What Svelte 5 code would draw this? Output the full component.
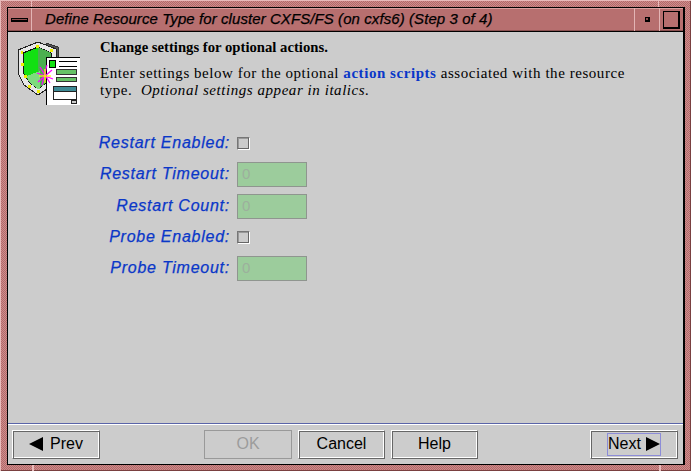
<script>
  const fields = [
    { label: 'Restart Enabled:', type: 'check' },
    { label: 'Restart Timeout:', type: 'text' },
    { label: 'Restart Count:', type: 'text' },
    { label: 'Probe Enabled:', type: 'check' },
    { label: 'Probe Timeout:', type: 'text' }
  ];
</script>

<div class="frame">
  <span class="notch nt-l"></span>
  <span class="notch nt-r"></span>
  <span class="notch nb-l"></span>
  <span class="notch nb-r"></span>
  <div class="window">
    <header class="titlebar">
      <div class="tb-btn menu-btn"><span class="menu-glyph"></span></div>
      <div class="title">Define Resource Type for cluster CXFS/FS (on cxfs6) (Step 3 of 4)</div>
      <div class="tb-btn min-btn"><span class="min-glyph"></span></div>
      <div class="tb-btn max-btn"><span class="max-glyph"></span></div>
    </header>

    <main class="content">
      <div class="intro">
        <svg class="icon" width="70" height="70" viewBox="0 0 70 70" shape-rendering="crispEdges">
          <polygon points="36,8 48,12 48,24 36,24" fill="#555" stroke="#333" />
          <polygon points="28,7 46,14 46,40 40,52 28,60 14,50 8,38 8,15" fill="#e8e8e8" stroke="#222" />
          <polygon points="28,12 41,18 41,38 36,48 28,54 19,47 13,37 13,18" fill="#12e012" stroke="#111" />
          <polygon points="28,12 41,18 41,38 36,48 28,54" fill="#4caf50" />
          <polygon points="17,41 30,36 30,54 28,54 19,47" fill="#7edc7e" />
          <rect x="36.5" y="22.5" width="34" height="48" fill="#fff" stroke="#000" />
          <rect x="39.5" y="25.5" width="6" height="7" fill="#12e012" stroke="#000" />
          <rect x="49" y="26" width="18" height="1" fill="#000" />
          <rect x="49" y="31" width="18" height="1" fill="#000" />
          <rect x="46.5" y="34.5" width="20" height="5" fill="#66c266" stroke="#333" />
          <rect x="46.5" y="42.5" width="20" height="4" fill="#66c266" stroke="#333" />
          <rect x="43.5" y="51.5" width="23" height="5" fill="#3d8a94" stroke="#222" />
          <rect x="43.5" y="56.5" width="23" height="8" fill="#fff" stroke="#222" />
          <rect x="61.5" y="65.5" width="5" height="3" fill="#ccc" stroke="#222" />
          <g fill="#ee0">
            <rect x="26" y="10" width="3" height="3" /><rect x="40" y="14" width="3" height="3" />
            <rect x="11" y="16" width="2" height="3" /><rect x="11" y="28" width="3" height="3" />
            <rect x="14" y="40" width="3" height="3" /><rect x="18" y="50" width="3" height="3" />
            <rect x="27" y="55" width="3" height="3" />
          </g>
          <g stroke="#f0f" stroke-width="1.2" shape-rendering="auto">
            <line x1="27" y1="38" x2="43" y2="44" /><line x1="37" y1="30" x2="32" y2="50" />
            <line x1="28" y1="47" x2="42" y2="35" /><line x1="30" y1="32" x2="40" y2="48" />
          </g>
          <g stroke="#ff0" stroke-width="1.2" shape-rendering="auto">
            <line x1="29" y1="41" x2="41" y2="41" /><line x1="35" y1="34" x2="35" y2="48" />
          </g>
        </svg>
        <div class="copy">
          <h1>Change settings for optional actions.</h1>
          <p>
            <span class="line">Enter settings below for the optional <b>action scripts</b> associated with the resource</span>
            <span class="line">type.&nbsp; <i>Optional settings appear in italics.</i></span>
          </p>
        </div>
      </div>

      <div class="form">
        {#each fields as f}
          <div class="label">{f.label}</div>
          {#if f.type === 'check'}
            <div class="check-cell"><span class="check"></span></div>
          {:else}
            <div class="input">0</div>
          {/if}
        {/each}
      </div>

      <div class="spacer"></div>

      <footer class="actions">
        <button class="btn"><span class="arrow left"></span>Prev</button>
        <div class="middle">
          <button class="btn disabled">OK</button>
          <button class="btn narrow">Cancel</button>
          <button class="btn narrow">Help</button>
        </div>
        <button class="btn next"><span class="focus">Next<span class="arrow right"></span></span></button>
      </footer>
    </main>
  </div>
</div>

<style>
  :global(body) {
    margin: 0;
    background: #ccc;
  }

  .frame {
    position: relative;
    box-sizing: border-box;
    width: 691px;
    height: 471px;
    padding: 7px 6px 6px 7px;
    background: repeating-conic-gradient(#d08c8c 0 25%, #b06a6a 0 50%) 0 0 / 2px 2px;
    box-shadow: inset 1px 1px 0 #e8baba, inset -1px -1px 0 #7a4040;
  }

  .notch {
    position: absolute;
    background: #e8baba;
  }
  .nt-l { left: 31px; top: 0; width: 1px; height: 7px; }
  .nt-r { left: 658px; top: 0; width: 1px; height: 7px; }
  .nb-l { left: 32px; top: 465px; width: 2px; height: 6px; }
  .nb-r { left: 659px; top: 465px; width: 2px; height: 6px; }

  .window {
    box-sizing: border-box;
    height: 100%;
    display: flex;
    flex-direction: column;
    border-left: 1px solid #000;
    border-top: 1px solid #000;
    border-right: 2px solid #000;
    border-bottom: 1px solid #000;
  }

  .titlebar {
    display: flex;
    align-items: stretch;
    height: 24px;
    flex: none;
    background: #b76f6f;
    border-bottom: 1px solid #000;
    box-sizing: border-box;
    box-shadow: inset 0 1px 0 #d9a0a0, inset 0 -1px 0 #8a5050;
  }

  .tb-btn {
    display: flex;
    align-items: center;
    justify-content: center;
    flex: none;
    box-sizing: border-box;
    border-left: 1px solid #e3b5b5;
  }
  .menu-btn {
    width: 24px;
    border-left: 0;
    border-right: 1px solid #e3b5b5;
  }
  .menu-glyph {
    width: 17px;
    height: 4px;
    background: #8c4f4f;
    border: 1px solid #000;
    border-bottom-width: 2px;
    box-sizing: border-box;
  }
  .min-btn { width: 25px; }
  .min-glyph {
    width: 5px;
    height: 5px;
    border: 1px solid #000;
    border-bottom-width: 2px;
    border-right-width: 2px;
    box-sizing: border-box;
    background: #8c4f4f;
  }
  .max-btn { width: 24px; }
  .max-glyph {
    width: 14px;
    height: 15px;
    border: 1px solid #000;
    border-bottom-width: 2px;
    border-right-width: 2px;
  }

  .title {
    flex: 1;
    padding-left: 13px;
    font: italic 15px/22px "Liberation Sans", Arial, sans-serif;
    letter-spacing: 0.08px;
    -webkit-text-stroke: 0.25px #000;
    color: #000;
    white-space: nowrap;
    overflow: hidden;
  }

  .content {
    flex: 1;
    display: flex;
    flex-direction: column;
    background: #ccc;
    min-height: 0;
  }

  .intro {
    display: flex;
    padding: 3px 0 0 2px;
  }
  .icon {
    flex: none;
  }
  .copy {
    margin-left: 20px;
    width: 540px;
    color: #000;
    font-family: "Liberation Serif", "Times New Roman", serif;
  }
  h1 {
    margin: 3px 0 0;
    font-size: 14.7px;
    line-height: 18px;
    font-weight: bold;
  }
  p {
    margin: 9px 0 0;
    font-size: 15px;
    letter-spacing: 0.55px;
    line-height: 17px;
  }
  .line {
    display: block;
    white-space: nowrap;
  }
  p b {
    color: #0a37c8;
  }

  .form {
    display: grid;
    grid-template-columns: 222px 70px;
    grid-template-rows: 25px 26px 25px 25px 25px;
    column-gap: 7px;
    row-gap: 6px;
    padding-top: 26px;
    align-items: center;
  }
  .label {
    align-self: start;
    padding-top: 2px;
    text-align: right;
    font: italic 16px/20px "Liberation Sans", Arial, sans-serif;
    letter-spacing: 0.75px;
    -webkit-text-stroke: 0.25px #0a37c8;
    color: #0a37c8;
  }
  .check-cell {
    display: flex;
    align-items: center;
  }
  .check {
    box-sizing: border-box;
    width: 13px;
    height: 13px;
    background: #ccc;
    border: 1px solid;
    border-color: #777 #fff #fff #777;
    box-shadow: inset -1px -1px 0 #666, inset 1px 1px 0 #999;
  }
  .input {
    align-self: start;
    box-sizing: border-box;
    height: 25px;
    background: #9ccc9c;
    border: 1px solid #8f958f;
    padding-left: 4px;
    font: 15px/22px "Liberation Sans", Arial, sans-serif;
    color: #9cb09c;
  }

  .spacer {
    flex: 1;
  }

  .actions {
    display: flex;
    justify-content: space-between;
    align-items: center;
    border-top: 1px solid #5a64a8;
    box-shadow: inset 0 1px 0 #fff;
    padding: 6px 5px 6px 4px;
    height: 41px;
    box-sizing: border-box;
    flex: none;
  }
  .middle {
    display: flex;
    gap: 6px;
    margin-right: 8px;
  }
  .btn {
    box-sizing: border-box;
    width: 88px;
    height: 29px;
    padding: 0;
    display: flex;
    align-items: center;
    justify-content: center;
    gap: 7px;
    background: #ccc;
    color: #000;
    font: 16px "Liberation Sans", Arial, sans-serif;
    border: 1px solid;
    border-color: #fff #666 #666 #fff;
    box-shadow: inset 1px 1px 0 #666, inset -1px -1px 0 #fff;
    outline: 0;
  }
  .btn.narrow {
    width: 87px;
  }
  .btn.disabled {
    color: #9c9c9c;
    border-color: #999;
    box-shadow: none;
  }
  .focus {
    display: flex;
    align-items: center;
    gap: 5px;
    height: 21px;
    border: 1px solid #8c8cd8;
  }
  .arrow {
    width: 0;
    height: 0;
    border-top: 7px solid transparent;
    border-bottom: 7px solid transparent;
  }
  .arrow.left {
    border-right: 14px solid #000;
  }
  .arrow.right {
    border-left: 14px solid #000;
  }
</style>
